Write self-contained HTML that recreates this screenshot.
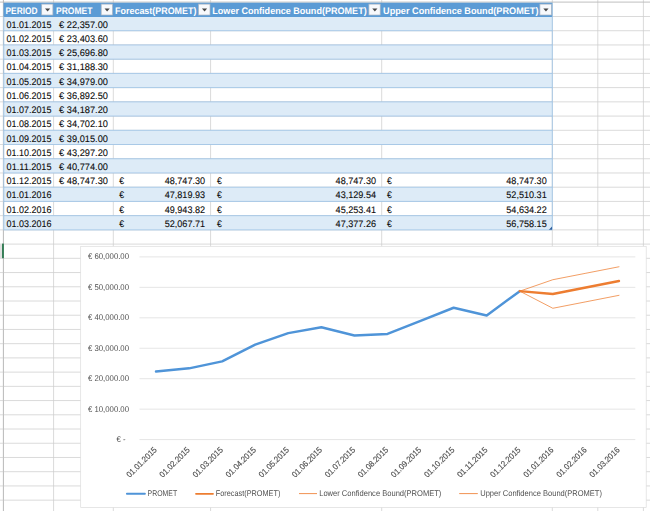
<!DOCTYPE html>
<html lang="en"><head><meta charset="utf-8"><title>Forecast sheet</title>
<style>
html,body{margin:0;padding:0;background:#fff;}
body{width:650px;height:511px;overflow:hidden;}
svg{display:block;}
text{font-family:"Liberation Sans", Arial, sans-serif;text-rendering:geometricPrecision;}
.cell{font-size:9.5px;fill:#0c0c0c;stroke:#0c0c0c;stroke-width:0.1px;}
.hdr{font-size:9.5px;font-weight:bold;fill:#fff;}
.ax{font-size:8.3px;fill:#505050;}
.rot{stroke:#505050;stroke-width:0.15px;}
</style></head><body>
<svg width="650" height="511" viewBox="0 0 650 511">
<rect x="0" y="0" width="650" height="511" fill="#ffffff"/>
<g stroke="#cdcdcd" stroke-width="0.75" fill="none">
<line x1="3.5" y1="16.50" x2="650" y2="16.50"/>
<line x1="3.5" y1="30.73" x2="650" y2="30.73"/>
<line x1="3.5" y1="44.95" x2="650" y2="44.95"/>
<line x1="3.5" y1="59.17" x2="650" y2="59.17"/>
<line x1="3.5" y1="73.40" x2="650" y2="73.40"/>
<line x1="3.5" y1="87.62" x2="650" y2="87.62"/>
<line x1="3.5" y1="101.85" x2="650" y2="101.85"/>
<line x1="3.5" y1="116.08" x2="650" y2="116.08"/>
<line x1="3.5" y1="130.30" x2="650" y2="130.30"/>
<line x1="3.5" y1="144.53" x2="650" y2="144.53"/>
<line x1="3.5" y1="158.75" x2="650" y2="158.75"/>
<line x1="3.5" y1="172.97" x2="650" y2="172.97"/>
<line x1="3.5" y1="187.20" x2="650" y2="187.20"/>
<line x1="3.5" y1="201.42" x2="650" y2="201.42"/>
<line x1="3.5" y1="215.65" x2="650" y2="215.65"/>
<line x1="3.5" y1="229.88" x2="650" y2="229.88"/>
<line x1="3.5" y1="244.10" x2="650" y2="244.10"/>
<line x1="3.5" y1="258.32" x2="650" y2="258.32"/>
<line x1="3.5" y1="272.55" x2="650" y2="272.55"/>
<line x1="3.5" y1="286.77" x2="650" y2="286.77"/>
<line x1="3.5" y1="301.00" x2="650" y2="301.00"/>
<line x1="3.5" y1="315.22" x2="650" y2="315.22"/>
<line x1="3.5" y1="329.45" x2="650" y2="329.45"/>
<line x1="3.5" y1="343.68" x2="650" y2="343.68"/>
<line x1="3.5" y1="357.90" x2="650" y2="357.90"/>
<line x1="3.5" y1="372.12" x2="650" y2="372.12"/>
<line x1="3.5" y1="386.35" x2="650" y2="386.35"/>
<line x1="3.5" y1="400.57" x2="650" y2="400.57"/>
<line x1="3.5" y1="414.80" x2="650" y2="414.80"/>
<line x1="3.5" y1="429.02" x2="650" y2="429.02"/>
<line x1="3.5" y1="443.25" x2="650" y2="443.25"/>
<line x1="3.5" y1="457.47" x2="650" y2="457.47"/>
<line x1="3.5" y1="471.70" x2="650" y2="471.70"/>
<line x1="3.5" y1="485.93" x2="650" y2="485.93"/>
<line x1="3.5" y1="500.15" x2="650" y2="500.15"/>
<line x1="53.6" y1="0" x2="53.6" y2="511"/>
<line x1="113.3" y1="0" x2="113.3" y2="511"/>
<line x1="210.6" y1="0" x2="210.6" y2="511"/>
<line x1="381.7" y1="0" x2="381.7" y2="511"/>
<line x1="552.3" y1="0" x2="552.3" y2="511"/>
<line x1="597.8" y1="0" x2="597.8" y2="511"/>
<line x1="643.4" y1="0" x2="643.4" y2="511"/>
</g>
<line x1="0" y1="2.1" x2="650" y2="2.1" stroke="#b8b8b8" stroke-width="0.9"/>
<line x1="3.4" y1="0" x2="3.4" y2="511" stroke="#b0b0b0" stroke-width="0.9"/>
<g stroke="#cfcfcf" stroke-width="0.75">
<line x1="0" y1="16.50" x2="3.4" y2="16.50"/>
<line x1="0" y1="30.73" x2="3.4" y2="30.73"/>
<line x1="0" y1="44.95" x2="3.4" y2="44.95"/>
<line x1="0" y1="59.17" x2="3.4" y2="59.17"/>
<line x1="0" y1="73.40" x2="3.4" y2="73.40"/>
<line x1="0" y1="87.62" x2="3.4" y2="87.62"/>
<line x1="0" y1="101.85" x2="3.4" y2="101.85"/>
<line x1="0" y1="116.08" x2="3.4" y2="116.08"/>
<line x1="0" y1="130.30" x2="3.4" y2="130.30"/>
<line x1="0" y1="144.53" x2="3.4" y2="144.53"/>
<line x1="0" y1="158.75" x2="3.4" y2="158.75"/>
<line x1="0" y1="172.97" x2="3.4" y2="172.97"/>
<line x1="0" y1="187.20" x2="3.4" y2="187.20"/>
<line x1="0" y1="201.42" x2="3.4" y2="201.42"/>
<line x1="0" y1="215.65" x2="3.4" y2="215.65"/>
<line x1="0" y1="229.88" x2="3.4" y2="229.88"/>
<line x1="0" y1="244.10" x2="3.4" y2="244.10"/>
<line x1="0" y1="258.32" x2="3.4" y2="258.32"/>
<line x1="0" y1="272.55" x2="3.4" y2="272.55"/>
<line x1="0" y1="286.77" x2="3.4" y2="286.77"/>
<line x1="0" y1="301.00" x2="3.4" y2="301.00"/>
<line x1="0" y1="315.22" x2="3.4" y2="315.22"/>
<line x1="0" y1="329.45" x2="3.4" y2="329.45"/>
<line x1="0" y1="343.68" x2="3.4" y2="343.68"/>
<line x1="0" y1="357.90" x2="3.4" y2="357.90"/>
<line x1="0" y1="372.12" x2="3.4" y2="372.12"/>
<line x1="0" y1="386.35" x2="3.4" y2="386.35"/>
<line x1="0" y1="400.57" x2="3.4" y2="400.57"/>
<line x1="0" y1="414.80" x2="3.4" y2="414.80"/>
<line x1="0" y1="429.02" x2="3.4" y2="429.02"/>
<line x1="0" y1="443.25" x2="3.4" y2="443.25"/>
<line x1="0" y1="457.47" x2="3.4" y2="457.47"/>
<line x1="0" y1="471.70" x2="3.4" y2="471.70"/>
<line x1="0" y1="485.93" x2="3.4" y2="485.93"/>
<line x1="0" y1="500.15" x2="3.4" y2="500.15"/>
</g>
<rect x="0" y="244.10" width="2.2" height="14.225" fill="#e1e1e1"/>
<rect x="2.1" y="243.60" width="1.7" height="14.62" fill="#217346"/>
<rect x="3.5" y="16.50" width="548.80" height="14.225" fill="#ddebf7"/>
<rect x="3.5" y="44.95" width="548.80" height="14.225" fill="#ddebf7"/>
<rect x="3.5" y="73.40" width="548.80" height="14.225" fill="#ddebf7"/>
<rect x="3.5" y="101.85" width="548.80" height="14.225" fill="#ddebf7"/>
<rect x="3.5" y="130.30" width="548.80" height="14.225" fill="#ddebf7"/>
<rect x="3.5" y="158.75" width="548.80" height="14.225" fill="#ddebf7"/>
<rect x="3.5" y="187.20" width="548.80" height="14.225" fill="#ddebf7"/>
<rect x="3.5" y="215.65" width="548.80" height="14.225" fill="#ddebf7"/>
<rect x="3.5" y="2.7" width="548.80" height="14.30" fill="#5b9bd5"/>
<g stroke="#9bc2e6" stroke-width="0.8" fill="none">
<line x1="3.5" y1="30.73" x2="552.3" y2="30.73"/>
<line x1="3.5" y1="44.95" x2="552.3" y2="44.95"/>
<line x1="3.5" y1="59.17" x2="552.3" y2="59.17"/>
<line x1="3.5" y1="73.40" x2="552.3" y2="73.40"/>
<line x1="3.5" y1="87.62" x2="552.3" y2="87.62"/>
<line x1="3.5" y1="101.85" x2="552.3" y2="101.85"/>
<line x1="3.5" y1="116.08" x2="552.3" y2="116.08"/>
<line x1="3.5" y1="130.30" x2="552.3" y2="130.30"/>
<line x1="3.5" y1="144.53" x2="552.3" y2="144.53"/>
<line x1="3.5" y1="158.75" x2="552.3" y2="158.75"/>
<line x1="3.5" y1="172.97" x2="552.3" y2="172.97"/>
<line x1="3.5" y1="187.20" x2="552.3" y2="187.20"/>
<line x1="3.5" y1="201.42" x2="552.3" y2="201.42"/>
<line x1="3.5" y1="215.65" x2="552.3" y2="215.65"/>
<line x1="3.5" y1="229.88" x2="552.3" y2="229.88"/>
<line x1="552.3" y1="2.7" x2="552.3" y2="229.88"/>
<line x1="3.8" y1="16.5" x2="3.8" y2="229.88"/>
</g>
<path d="M548.90 229.68 L552.00 229.68 L552.00 226.57 Z" fill="#2f5f9e"/>
<rect x="41.70" y="4.1" width="11.20" height="10.9" fill="#f7f9fc" stroke="#a9b4c2" stroke-width="0.7"/>
<path d="M45.00 8.4 L50.20 8.4 L47.60 11.5 Z" fill="#444444"/>
<rect x="101.20" y="4.1" width="11.30" height="10.9" fill="#f7f9fc" stroke="#a9b4c2" stroke-width="0.7"/>
<path d="M104.55 8.4 L109.75 8.4 L107.15 11.5 Z" fill="#444444"/>
<rect x="198.50" y="4.1" width="11.50" height="10.9" fill="#f7f9fc" stroke="#a9b4c2" stroke-width="0.7"/>
<path d="M201.95 8.4 L207.15 8.4 L204.55 11.5 Z" fill="#444444"/>
<rect x="368.90" y="4.1" width="11.30" height="10.9" fill="#f7f9fc" stroke="#a9b4c2" stroke-width="0.7"/>
<path d="M372.25 8.4 L377.45 8.4 L374.85 11.5 Z" fill="#444444"/>
<rect x="539.90" y="4.1" width="11.50" height="10.9" fill="#f7f9fc" stroke="#a9b4c2" stroke-width="0.7"/>
<path d="M543.35 8.4 L548.55 8.4 L545.95 11.5 Z" fill="#444444"/>
<text class="hdr" x="5.5" y="13.95" textLength="32.0" lengthAdjust="spacingAndGlyphs">PERIOD</text>
<text class="hdr" x="56.0" y="13.95" textLength="36.4" lengthAdjust="spacingAndGlyphs">PROMET</text>
<text class="hdr" x="115.1" y="13.95" textLength="81.3" lengthAdjust="spacingAndGlyphs">Forecast(PROMET)</text>
<text class="hdr" x="212.3" y="13.95" textLength="154.4" lengthAdjust="spacingAndGlyphs">Lower Confidence Bound(PROMET)</text>
<text class="hdr" x="383.1" y="13.95" textLength="155.4" lengthAdjust="spacingAndGlyphs">Upper Confidence Bound(PROMET)</text>
<text class="cell" x="6.6" y="27.73" textLength="44.9" lengthAdjust="spacingAndGlyphs">01.01.2015</text>
<text class="cell" x="59.1" y="27.73" textLength="48.9" lengthAdjust="spacingAndGlyphs">€ 22,357.00</text>
<text class="cell" x="6.6" y="41.95" textLength="44.9" lengthAdjust="spacingAndGlyphs">01.02.2015</text>
<text class="cell" x="59.1" y="41.95" textLength="48.9" lengthAdjust="spacingAndGlyphs">€ 23,403.60</text>
<text class="cell" x="6.6" y="56.17" textLength="44.9" lengthAdjust="spacingAndGlyphs">01.03.2015</text>
<text class="cell" x="59.1" y="56.17" textLength="48.9" lengthAdjust="spacingAndGlyphs">€ 25,696.80</text>
<text class="cell" x="6.6" y="70.40" textLength="44.9" lengthAdjust="spacingAndGlyphs">01.04.2015</text>
<text class="cell" x="59.1" y="70.40" textLength="48.9" lengthAdjust="spacingAndGlyphs">€ 31,188.30</text>
<text class="cell" x="6.6" y="84.62" textLength="44.9" lengthAdjust="spacingAndGlyphs">01.05.2015</text>
<text class="cell" x="59.1" y="84.62" textLength="48.9" lengthAdjust="spacingAndGlyphs">€ 34,979.00</text>
<text class="cell" x="6.6" y="98.85" textLength="44.9" lengthAdjust="spacingAndGlyphs">01.06.2015</text>
<text class="cell" x="59.1" y="98.85" textLength="48.9" lengthAdjust="spacingAndGlyphs">€ 36,892.50</text>
<text class="cell" x="6.6" y="113.08" textLength="44.9" lengthAdjust="spacingAndGlyphs">01.07.2015</text>
<text class="cell" x="59.1" y="113.08" textLength="48.9" lengthAdjust="spacingAndGlyphs">€ 34,187.20</text>
<text class="cell" x="6.6" y="127.30" textLength="44.9" lengthAdjust="spacingAndGlyphs">01.08.2015</text>
<text class="cell" x="59.1" y="127.30" textLength="48.9" lengthAdjust="spacingAndGlyphs">€ 34,702.10</text>
<text class="cell" x="6.6" y="141.53" textLength="44.9" lengthAdjust="spacingAndGlyphs">01.09.2015</text>
<text class="cell" x="59.1" y="141.53" textLength="48.9" lengthAdjust="spacingAndGlyphs">€ 39,015.00</text>
<text class="cell" x="6.6" y="155.75" textLength="44.9" lengthAdjust="spacingAndGlyphs">01.10.2015</text>
<text class="cell" x="59.1" y="155.75" textLength="48.9" lengthAdjust="spacingAndGlyphs">€ 43,297.20</text>
<text class="cell" x="6.6" y="169.97" textLength="44.9" lengthAdjust="spacingAndGlyphs">01.11.2015</text>
<text class="cell" x="59.1" y="169.97" textLength="48.9" lengthAdjust="spacingAndGlyphs">€ 40,774.00</text>
<text class="cell" x="6.6" y="184.20" textLength="44.9" lengthAdjust="spacingAndGlyphs">01.12.2015</text>
<text class="cell" x="59.1" y="184.20" textLength="48.9" lengthAdjust="spacingAndGlyphs">€ 48,747.30</text>
<text class="cell" x="119.2" y="184.20" textLength="4.8" lengthAdjust="spacingAndGlyphs">€</text>
<text class="cell" x="205.1" y="184.20" text-anchor="end" textLength="40.4" lengthAdjust="spacingAndGlyphs">48,747.30</text>
<text class="cell" x="216.9" y="184.20" textLength="4.8" lengthAdjust="spacingAndGlyphs">€</text>
<text class="cell" x="376.0" y="184.20" text-anchor="end" textLength="40.4" lengthAdjust="spacingAndGlyphs">48,747.30</text>
<text class="cell" x="386.9" y="184.20" textLength="4.8" lengthAdjust="spacingAndGlyphs">€</text>
<text class="cell" x="546.7" y="184.20" text-anchor="end" textLength="40.4" lengthAdjust="spacingAndGlyphs">48,747.30</text>
<text class="cell" x="6.6" y="198.42" textLength="44.9" lengthAdjust="spacingAndGlyphs">01.01.2016</text>
<text class="cell" x="119.2" y="198.42" textLength="4.8" lengthAdjust="spacingAndGlyphs">€</text>
<text class="cell" x="205.1" y="198.42" text-anchor="end" textLength="40.4" lengthAdjust="spacingAndGlyphs">47,819.93</text>
<text class="cell" x="216.9" y="198.42" textLength="4.8" lengthAdjust="spacingAndGlyphs">€</text>
<text class="cell" x="376.0" y="198.42" text-anchor="end" textLength="40.4" lengthAdjust="spacingAndGlyphs">43,129.54</text>
<text class="cell" x="386.9" y="198.42" textLength="4.8" lengthAdjust="spacingAndGlyphs">€</text>
<text class="cell" x="546.7" y="198.42" text-anchor="end" textLength="40.4" lengthAdjust="spacingAndGlyphs">52,510.31</text>
<text class="cell" x="6.6" y="212.65" textLength="44.9" lengthAdjust="spacingAndGlyphs">01.02.2016</text>
<text class="cell" x="119.2" y="212.65" textLength="4.8" lengthAdjust="spacingAndGlyphs">€</text>
<text class="cell" x="205.1" y="212.65" text-anchor="end" textLength="40.4" lengthAdjust="spacingAndGlyphs">49,943.82</text>
<text class="cell" x="216.9" y="212.65" textLength="4.8" lengthAdjust="spacingAndGlyphs">€</text>
<text class="cell" x="376.0" y="212.65" text-anchor="end" textLength="40.4" lengthAdjust="spacingAndGlyphs">45,253.41</text>
<text class="cell" x="386.9" y="212.65" textLength="4.8" lengthAdjust="spacingAndGlyphs">€</text>
<text class="cell" x="546.7" y="212.65" text-anchor="end" textLength="40.4" lengthAdjust="spacingAndGlyphs">54,634.22</text>
<text class="cell" x="6.6" y="226.88" textLength="44.9" lengthAdjust="spacingAndGlyphs">01.03.2016</text>
<text class="cell" x="119.2" y="226.88" textLength="4.8" lengthAdjust="spacingAndGlyphs">€</text>
<text class="cell" x="205.1" y="226.88" text-anchor="end" textLength="40.4" lengthAdjust="spacingAndGlyphs">52,067.71</text>
<text class="cell" x="216.9" y="226.88" textLength="4.8" lengthAdjust="spacingAndGlyphs">€</text>
<text class="cell" x="376.0" y="226.88" text-anchor="end" textLength="40.4" lengthAdjust="spacingAndGlyphs">47,377.26</text>
<text class="cell" x="386.9" y="226.88" textLength="4.8" lengthAdjust="spacingAndGlyphs">€</text>
<text class="cell" x="546.7" y="226.88" text-anchor="end" textLength="40.4" lengthAdjust="spacingAndGlyphs">56,758.15</text>
<g style="filter:opacity(1)">
<rect x="80.7" y="246.3" width="565.50" height="261.10" fill="#ffffff" stroke="#dcdcdc" stroke-width="0.7"/>
<g stroke="#dcdcdc" stroke-width="0.75">
<line x1="139.5" y1="439.60" x2="635.3" y2="439.60"/>
<line x1="139.5" y1="409.15" x2="635.3" y2="409.15"/>
<line x1="139.5" y1="378.70" x2="635.3" y2="378.70"/>
<line x1="139.5" y1="348.25" x2="635.3" y2="348.25"/>
<line x1="139.5" y1="317.80" x2="635.3" y2="317.80"/>
<line x1="139.5" y1="287.35" x2="635.3" y2="287.35"/>
<line x1="139.5" y1="256.90" x2="635.3" y2="256.90"/>
</g>
<text class="ax" x="129" y="411.60" text-anchor="end" textLength="41" lengthAdjust="spacingAndGlyphs">€ 10,000.00</text>
<text class="ax" x="129" y="381.15" text-anchor="end" textLength="41" lengthAdjust="spacingAndGlyphs">€ 20,000.00</text>
<text class="ax" x="129" y="350.70" text-anchor="end" textLength="41" lengthAdjust="spacingAndGlyphs">€ 30,000.00</text>
<text class="ax" x="129" y="320.25" text-anchor="end" textLength="41" lengthAdjust="spacingAndGlyphs">€ 40,000.00</text>
<text class="ax" x="129" y="289.80" text-anchor="end" textLength="41" lengthAdjust="spacingAndGlyphs">€ 50,000.00</text>
<text class="ax" x="129" y="259.35" text-anchor="end" textLength="41" lengthAdjust="spacingAndGlyphs">€ 60,000.00</text>
<text class="ax" x="116.4" y="442.05" textLength="9.1" lengthAdjust="spacingAndGlyphs">€ -</text>
<text class="ax rot" transform="translate(157.30 450.5) rotate(-45)" text-anchor="end" textLength="38.9" lengthAdjust="spacingAndGlyphs">01.01.2015</text>
<text class="ax rot" transform="translate(190.37 450.5) rotate(-45)" text-anchor="end" textLength="38.9" lengthAdjust="spacingAndGlyphs">01.02.2015</text>
<text class="ax rot" transform="translate(223.44 450.5) rotate(-45)" text-anchor="end" textLength="38.9" lengthAdjust="spacingAndGlyphs">01.03.2015</text>
<text class="ax rot" transform="translate(256.51 450.5) rotate(-45)" text-anchor="end" textLength="38.9" lengthAdjust="spacingAndGlyphs">01.04.2015</text>
<text class="ax rot" transform="translate(289.58 450.5) rotate(-45)" text-anchor="end" textLength="38.9" lengthAdjust="spacingAndGlyphs">01.05.2015</text>
<text class="ax rot" transform="translate(322.65 450.5) rotate(-45)" text-anchor="end" textLength="38.9" lengthAdjust="spacingAndGlyphs">01.06.2015</text>
<text class="ax rot" transform="translate(355.72 450.5) rotate(-45)" text-anchor="end" textLength="38.9" lengthAdjust="spacingAndGlyphs">01.07.2015</text>
<text class="ax rot" transform="translate(388.79 450.5) rotate(-45)" text-anchor="end" textLength="38.9" lengthAdjust="spacingAndGlyphs">01.08.2015</text>
<text class="ax rot" transform="translate(421.86 450.5) rotate(-45)" text-anchor="end" textLength="38.9" lengthAdjust="spacingAndGlyphs">01.09.2015</text>
<text class="ax rot" transform="translate(454.93 450.5) rotate(-45)" text-anchor="end" textLength="38.9" lengthAdjust="spacingAndGlyphs">01.10.2015</text>
<text class="ax rot" transform="translate(488.00 450.5) rotate(-45)" text-anchor="end" textLength="38.9" lengthAdjust="spacingAndGlyphs">01.11.2015</text>
<text class="ax rot" transform="translate(521.07 450.5) rotate(-45)" text-anchor="end" textLength="38.9" lengthAdjust="spacingAndGlyphs">01.12.2015</text>
<text class="ax rot" transform="translate(554.14 450.5) rotate(-45)" text-anchor="end" textLength="38.9" lengthAdjust="spacingAndGlyphs">01.01.2016</text>
<text class="ax rot" transform="translate(587.21 450.5) rotate(-45)" text-anchor="end" textLength="38.9" lengthAdjust="spacingAndGlyphs">01.02.2016</text>
<text class="ax rot" transform="translate(620.28 450.5) rotate(-45)" text-anchor="end" textLength="38.9" lengthAdjust="spacingAndGlyphs">01.03.2016</text>
<polyline points="156.00,371.52 189.07,368.34 222.14,361.35 255.21,344.63 288.28,333.09 321.35,327.26 354.42,335.50 387.49,333.93 420.56,320.80 453.63,307.76 486.70,315.44 519.77,291.16" fill="none" stroke="#4f94d8" stroke-width="2.45" stroke-linecap="round" stroke-linejoin="round"/>
<polyline points="519.77,291.16 552.84,308.27 585.91,301.80 618.98,295.34" fill="none" stroke="#ed7d31" stroke-width="0.75" stroke-linecap="round" stroke-linejoin="round"/>
<polyline points="519.77,291.16 552.84,279.71 585.91,273.24 618.98,266.77" fill="none" stroke="#ed7d31" stroke-width="0.75" stroke-linecap="round" stroke-linejoin="round"/>
<polyline points="519.77,291.16 552.84,293.99 585.91,287.52 618.98,281.05" fill="none" stroke="#ed7d31" stroke-width="2.4" stroke-linecap="round" stroke-linejoin="round"/>
<line x1="126.9" y1="493.8" x2="144.9" y2="493.8" stroke="#4f94d8" stroke-width="1.9" stroke-linecap="round"/>
<line x1="196.0" y1="493.8" x2="213.0" y2="493.8" stroke="#ed7d31" stroke-width="1.8" stroke-linecap="round"/>
<line x1="299" y1="493.6" x2="317" y2="493.6" stroke="#ed7d31" stroke-width="0.85"/>
<line x1="459.2" y1="493.6" x2="477.8" y2="493.6" stroke="#ed7d31" stroke-width="0.85"/>
<text class="ax" x="147.6" y="496.3" textLength="29.6" lengthAdjust="spacingAndGlyphs">PROMET</text>
<text class="ax" x="215.8" y="496.3" textLength="64.6" lengthAdjust="spacingAndGlyphs">Forecast(PROMET)</text>
<text class="ax" x="319.2" y="496.3" textLength="122.2" lengthAdjust="spacingAndGlyphs">Lower Confidence Bound(PROMET)</text>
<text class="ax" x="480.2" y="496.3" textLength="121.8" lengthAdjust="spacingAndGlyphs">Upper Confidence Bound(PROMET)</text>
</g>
</svg>
</body></html>
